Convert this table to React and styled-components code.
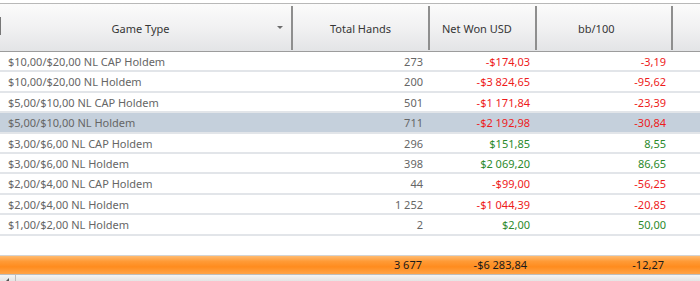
import React from 'react'
import styled, { createGlobalStyle } from 'styled-components'

const GlobalStyle = createGlobalStyle`
  html, body { margin: 0; padding: 0; background: #ffffff; }
  body { font-family: "Noto Sans", "DejaVu Sans", sans-serif; }
`

const COLS = [293, 137, 107, 136, 27]

const Grid = styled.div`
  width: 700px;
  height: 281px;
  display: flex;
  flex-direction: column;
  background: #fff;
  overflow: hidden;
  border-top: 3px solid #fff;
`

const HeaderRow = styled.div`
  display: flex;
  flex: none;
  height: 49px;
  border-top: 1px solid #b8b8b8;
  border-bottom: 1px solid #9c9c9c;
  background: linear-gradient(#fbfbfb, #f1f1f2 50%, #e3e4e6);
  box-sizing: border-box;
`

const HeaderCell = styled.div`
  position: relative;
  width: ${p => p.w}px;
  flex: none;
  display: flex;
  align-items: center;
  justify-content: ${p => p.align || 'center'};
  padding-left: ${p => p.pl || 0}px;
  padding-right: ${p => p.pr || 0}px;
  box-sizing: border-box;
  font-size: 11px;
  color: #363636;
  border-right: ${p => (p.last ? 'none' : '2px solid #8e8e8e')};
  margin: 2px 0 1px;
  &:first-child::before {
    content: '';
    position: absolute;
    left: 0;
    top: 11px;
    height: 18px;
    width: 1px;
    background: #777;
  }
`

const SortArrow = styled.span`
  position: absolute;
  right: 8px;
  top: 20px;
  width: 0;
  height: 0;
  border-left: 3px solid transparent;
  border-right: 3px solid transparent;
  border-top: 3px solid #6c6c6c;
`

const Body = styled.div`
  flex: 1;
  display: flex;
  flex-direction: column;
`

const Row = styled.div`
  display: flex;
  height: 20.4px;
  box-sizing: border-box;
  border-bottom: 2px solid #e2e5e9;
  background: ${p => (p.selected ? '#c5d0dc' : '#fff')};
  font-size: 11px;
  line-height: 20px;
`

const Cell = styled.div`
  width: ${p => p.w}px;
  flex: none;
  box-sizing: border-box;
  text-align: ${p => p.align || 'left'};
  padding: ${p => (p.align === 'right' ? '0 7px 0 0' : '0 0 0 8px')};
  color: ${p => p.color || '#666666'};
  white-space: nowrap;
`

const Footer = styled.div`
  display: flex;
  flex: none;
  height: 18px;
  border-top: 1px solid #d4d4d4;
  background: linear-gradient(#ffbb70, #ff9a36 30%, #ff8c1e 60%, #ffa448);
  font-size: 11px;
  line-height: 17px;
  color: #1a1a1a;
`

const FooterCell = styled(Cell)`
  color: #1a1a1a;
  padding-right: ${p => p.pr || 8}px;
`

const ScrollBar = styled.div`
  display: flex;
  flex: none;
  height: 9px;
  border-top: 1px solid #bdbdbd;
  background: linear-gradient(#f4f4f4, #dcdcdc);
`

const ScrollButton = styled.div`
  width: 15px;
  border-right: 1px solid #bcbcbc;
  display: flex;
  align-items: center;
  justify-content: center;
  &::after {
    content: '';
    border-top: 3px solid transparent;
    border-bottom: 3px solid transparent;
    border-right: 3px solid #555;
    margin-top: 3px;
  }
`

const red = '#ee1c1c'
const green = '#2c8a2c'

const rows = [
  ['$10,00/$20,00 NL CAP Holdem', '273', '-$174,03', '-3,19'],
  ['$10,00/$20,00 NL Holdem', '200', '-$3 824,65', '-95,62'],
  ['$5,00/$10,00 NL CAP Holdem', '501', '-$1 171,84', '-23,39'],
  ['$5,00/$10,00 NL Holdem', '711', '-$2 192,98', '-30,84'],
  ['$3,00/$6,00 NL CAP Holdem', '296', '$151,85', '8,55'],
  ['$3,00/$6,00 NL Holdem', '398', '$2 069,20', '86,65'],
  ['$2,00/$4,00 NL CAP Holdem', '44', '-$99,00', '-56,25'],
  ['$2,00/$4,00 NL Holdem', '1 252', '-$1 044,39', '-20,85'],
  ['$1,00/$2,00 NL Holdem', '2', '$2,00', '50,00'],
]

export default function App() {
  return (
    <>
      <GlobalStyle />
      <Grid>
        <HeaderRow>
          <HeaderCell w={COLS[0]} pr={10}>
            Game Type
            <SortArrow />
          </HeaderCell>
          <HeaderCell w={COLS[1]}>Total Hands</HeaderCell>
          <HeaderCell w={COLS[2]} align="flex-start" pl={12}>Net Won USD</HeaderCell>
          <HeaderCell w={COLS[3]} align="flex-start" pl={41}>bb/100</HeaderCell>
          <HeaderCell w={COLS[4]} last />
        </HeaderRow>
        <Body>
          {rows.map(([game, hands, won, bb], i) => {
            const c = won.startsWith('-') ? red : green
            return (
              <Row key={game} selected={i === 3}>
                <Cell w={COLS[0]}>{game}</Cell>
                <Cell w={COLS[1]} align="right">{hands}</Cell>
                <Cell w={COLS[2]} align="right" color={c}>{won}</Cell>
                <Cell w={COLS[3]} align="right" color={c}>{bb}</Cell>
              </Row>
            )
          })}
        </Body>
        <Footer>
          <FooterCell w={COLS[0]} />
          <FooterCell w={COLS[1]} align="right" pr={8}>3 677</FooterCell>
          <FooterCell w={COLS[2]} align="right" pr={10}>-$6 283,84</FooterCell>
          <FooterCell w={COLS[3]} align="right" pr={9}>-12,27</FooterCell>
        </Footer>
        <ScrollBar>
          <ScrollButton />
        </ScrollBar>
      </Grid>
    </>
  )
}
